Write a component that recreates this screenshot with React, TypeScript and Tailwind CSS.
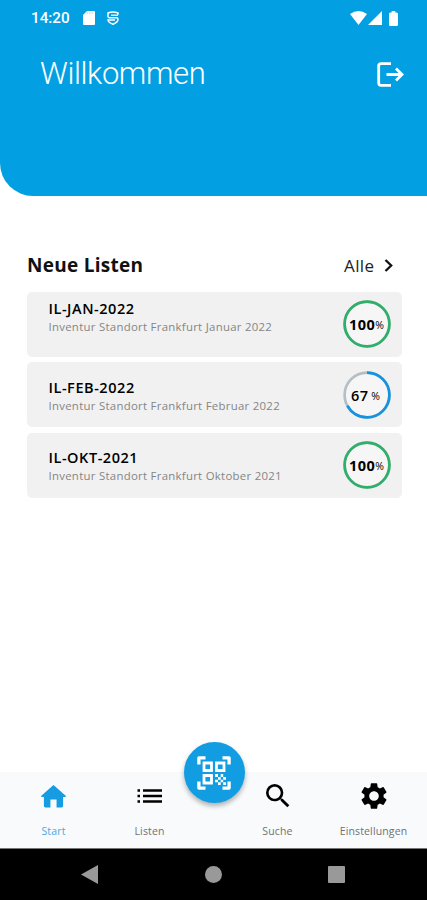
import React from "react";
import { MdSearch, MdSettings } from "react-icons/md";

type Item = { title: string; text: string; percent: number; color: string; pad: string };

const items: Item[] = [
  { title: "IL-JAN-2022", text: "Inventur Standort Frankfurt Januar 2022", percent: 100, color: "#2fb06a", pad: "pt-[7px]" },
  { title: "IL-FEB-2022", text: "Inventur Standort Frankfurt Februar 2022", percent: 67, color: "#1593df", pad: "pt-[15.5px]" },
  { title: "IL-OKT-2021", text: "Inventur Standort Frankfurt Oktober 2021", percent: 100, color: "#2fb06a", pad: "pt-[15px]" },
];

function Ring({ percent, color }: { percent: number; color: string }) {
  const full = percent === 100;
  return (
    <div className="relative mr-[11px] flex h-12 w-12 shrink-0 items-center justify-center self-center">
      <svg className="absolute inset-0" width="48" height="48" viewBox="0 0 48 48" fill="none" strokeWidth="2.7">
        <circle cx="24" cy="24" r="22.4" fill="#f6f6f6" stroke="#b4bec3" />
        <circle cx="24" cy="24" r="22.4" stroke={color} pathLength="100" strokeDasharray={`${percent} 100`} transform="rotate(-90 24 24)" />
      </svg>
      <span className={`relative flex items-baseline whitespace-nowrap pt-[3px] text-[14.5px] leading-5 text-black ${full ? "font-bold tracking-[0.5px]" : "gap-[3px] pr-[2px] font-semibold tracking-[0.4px]"}`}>
        {percent}
        <span className="relative -top-px text-[10.5px] font-normal tracking-normal">%</span>
      </span>
    </div>
  );
}

function Card({ item }: { item: Item }) {
  return (
    <div className="flex h-[65px] justify-between rounded-[5px] bg-[#f1f1f1] pl-[21.5px]">
      <div className={`whitespace-nowrap ${item.pad}`}>
        <div className="text-[14.5px] font-semibold leading-5 tracking-[0.55px] text-black">{item.title}</div>
        <div className="-mt-[1px] text-[11.4px] leading-[18px] tracking-[0.28px] text-[#858585]">{item.text}</div>
      </div>
      <Ring percent={item.percent} color={item.color} />
    </div>
  );
}

function StatusBar() {
  return (
    <div className="flex h-9 items-center justify-between pl-[31px] pr-[29px]">
      <div className="flex items-center">
        <span className="w-[52px] font-[Roboto] text-[15.2px] font-medium">14:20</span>
        <svg width="12" height="14" viewBox="0 0 12 14" fill="currentColor">
          <path d="M4 0h7a1 1 0 0 1 1 1v12a1 1 0 0 1-1 1H1a1 1 0 0 1-1-1V4z" />
          <path d="M4.2 1v2M6.7 1v2M9.2 1v2" stroke="#8bd0f3" strokeWidth=".7" />
        </svg>
        <svg className="ml-[12px]" width="12" height="14" viewBox="0 0 12 14" fill="none" stroke="currentColor" strokeWidth="1.5">
          <path d="M11 3.800V2Q6 .2 1 2v3.400q0 1.400 1.500 1.400h7q1.500 0 1.500 1.500C11 10.800 8.500 12.300 6 13.200 3.500 12.300 1.200 11 1 9h7" />
          <path d="M4 4.200h7" strokeWidth="1.3" />
        </svg>
      </div>
      <div className="flex items-center">
        <svg width="17" height="14" viewBox="0 0 17 14" fill="currentColor"><path d="M0 3Q8.500-3 17 3L8.500 14z" /></svg>
        <svg className="ml-[1px]" width="14" height="14" viewBox="0 0 14 14" fill="currentColor"><path d="M14 0v14H0z" /></svg>
        <svg className="ml-[7px]" width="9" height="15" viewBox="0 0 10 15" preserveAspectRatio="none" fill="currentColor"><path d="M3 0h4v1.500h1.500Q10 1.500 10 3v10.500q0 1.500-1.500 1.500h-7Q0 15 0 13.500V3q0-1.500 1.500-1.500H3z" /></svg>
      </div>
    </div>
  );
}

function QrIcon() {
  return (
    <svg width="34" height="34" viewBox="0 0 34 34" fill="none" stroke="white" strokeWidth="3.3">
      <path strokeLinejoin="round" d="M8.500 1.900H1.900V8.500M25.500 1.900h6.600V8.500M8.500 32.100H1.900V25.500M25.500 32.100h6.600V25.500" />
      <path d="M7 7h7.500v7.500H7zM19.500 7H27v7.500h-7.500zM7 19.500h7.500V27H7z" strokeWidth="2.8" />
      <path fill="white" stroke="none" d="M18 18h3v3h-3zM23.700 18h2.500v3h-2.500zM21 21h2.700v2.700H21zM26.200 21H29v2.700h-2.800zM18 23.700h3v2.500h-3zM23.700 23.700h2.500v2.500h-2.500zM21 26.200h2.700V29H21zM26.200 26.200H29V29h-2.800z" />
    </svg>
  );
}

function NavItem({ label, active = false, children }: { label: string; active?: boolean; children: React.ReactNode }) {
  return (
    <div className={`flex flex-col items-center ${active ? "text-[#159ce2]" : "text-black"}`}>
      <div className="flex h-[50px] items-center justify-center pb-[2px]">{children}</div>
      <span className={`whitespace-nowrap text-[10.5px] leading-[18px] tracking-[0.14px] ${active ? "text-[#4aa9e0]" : "text-[#717171]"}`}>{label}</span>
    </div>
  );
}

export default function App() {
  return (
    <div className="flex h-[900px] w-[427px] flex-col overflow-hidden bg-white font-['Open_Sans','Noto_Sans',sans-serif]">
      <header className="h-[195.5px] shrink-0 rounded-bl-[33px] bg-[#029fe3] text-white">
        <StatusBar />
        <div className="flex h-[76px] items-center justify-between pl-[40px] pr-[23px]">
          <h1 className="whitespace-nowrap font-[Roboto] text-[31px] font-light leading-9 tracking-[-0.4px]">Willkommen</h1>
          <svg width="27" height="25" viewBox="0 0 27 25" fill="none" stroke="currentColor" strokeWidth="2.8">
            <path d="M14 1.700H4Q1.700 1.700 1.700 4v17q0 2.300 2.300 2.300h10M9.500 12.500h15M19 6.500l6 6-6 6" />
          </svg>
        </div>
      </header>
      <main className="flex flex-1 flex-col pl-[27px] pr-[25.5px] pt-[53.5px]">
        <div className="flex h-[42.5px] items-start justify-between">
          <h2 className="text-[19px] font-bold leading-8 tracking-[0.28px] text-[#111]">Neue Listen</h2>
          <div className="flex h-8 items-center pr-[9px] pt-px text-[17px] tracking-[0.4px] text-[#222]">
            Alle
            <svg className="ml-[9px]" width="9" height="13" viewBox="0 0 9 13" fill="none" stroke="#111" strokeWidth="2.300"><path d="M1.500 1l5.700 5.500L1.500 12" /></svg>
          </div>
        </div>
        <div className="flex flex-col gap-[5.5px]">
          {items.map((item) => <Card key={item.title} item={item} />)}
        </div>
      </main>
      <nav className="relative grid h-[77px] shrink-0 grid-cols-[107px_85px_43px_85px_107px] border-b border-[#777] bg-[#f8fafc]">
        <NavItem label="Start" active>
          <svg width="25" height="23" viewBox="0 0 26 24" fill="currentColor"><path d="M13 0l13 11.500q0 1-1 1h-2V22q0 1.500-1.500 1.500h-5.300V15H9.800v8.500H4.500Q3 23.500 3 22v-9.500H1q-1 0-1-1z" /></svg>
        </NavItem>
        <NavItem label="Listen">
          <svg width="25" height="16" viewBox="0 0 25 16" stroke="currentColor" strokeWidth="2.300"><path d="M.5 2.500H3M6 2.500h19M.5 8H3M6 8h19M.5 13.500H3M6 13.500h19" /></svg>
        </NavItem>
        <div />
        <NavItem label="Suche"><MdSearch size={32} /></NavItem>
        <NavItem label="Einstellungen"><MdSettings size={32} /></NavItem>
        <button className="absolute left-[183.5px] top-[-30px] flex h-[61px] w-[61px] items-center justify-center rounded-full bg-[#129de3] shadow-[0_3px_5px_rgba(0,0,0,0.3)]">
          <QrIcon />
        </button>
      </nav>
      <footer className="flex h-[51px] shrink-0 items-center justify-between bg-black pl-[81px] pr-[82px]">
        <svg width="17" height="19" viewBox="0 0 17 19" fill="#999"><path d="M17 0v19L0 9.500z" /></svg>
        <div className="h-[17px] w-[17px] rounded-full bg-[#999]" />
        <div className="h-[17px] w-[17px] rounded-[1px] bg-[#999]" />
      </footer>
    </div>
  );
}
